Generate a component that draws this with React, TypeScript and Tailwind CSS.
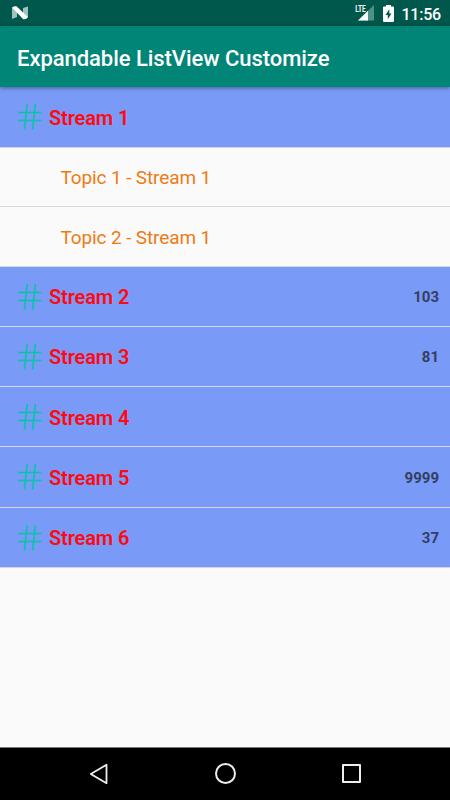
interface Stream {
    name: string;
    count?: number;
    topics?: string[];
    height: string;
}

const streams: Stream[] = [
    {
        name: "Stream 1",
        topics: ["Topic 1 - Stream 1", "Topic 2 - Stream 1"],
        height: "h-[61px]",
    },
    { name: "Stream 2", count: 103, height: "h-[60px]" },
    { name: "Stream 3", count: 81, height: "h-[60px]" },
    { name: "Stream 4", height: "h-[60px] pt-px" },
    { name: "Stream 5", count: 9999, height: "h-[61px]" },
    { name: "Stream 6", count: 37, height: "h-[60px]" },
];

const HashIcon = () => (
    <svg
        width="24"
        height="28"
        viewBox="0 0 24 28"
        fill="none"
        stroke="#09c4a9"
        strokeWidth="1.7"
    >
        <path d="M0 9.5h23.6M0 17.5h23.6M9.2 1L6.4 26.6M17.4 1L14.6 26.6" />
    </svg>
);

const StatusBar = () => (
    <div className="flex h-[26px] shrink-0 items-center bg-[#00574b] pl-3 pr-[9px] text-white">
        <svg width="16" height="14" viewBox="0 0 16 14">
            <path d="M0 1.5L5 .5V11L0 13zM11 2L16 .5V11L11 13z" fill="#9fc3bd" />
            <path d="M0 1.5Q3-.6 5 .7L16 11Q13.8 14.3 11 13z" fill="#fff" />
        </svg>
        <div className="ml-auto flex items-center">
            <svg width="20" height="18" viewBox="0 0 20 18">
                <path d="M3 16.500L19 1V16.500z" fill="#528f85" />
                <path d="M3 16.500L13 6.800V16.500z" fill="#fff" />
                <path d="M0 0H11V8L9 10H0z" fill="#00574b" />
                <text
                    x="0.2"
                    y="8.2"
                    fill="#fff"
                    fontSize="9"
                    fontWeight="700"
                    textLength="10.5"
                    lengthAdjust="spacingAndGlyphs"
                >
                    LTE
                </text>
            </svg>
            <svg className="ml-[8px]" width="11" height="17" viewBox="0 0 11 17">
                <path
                    d="M3 0h5v1.6h2q1 0 1 1V16q0 1-1 1H1q-1 0-1-1V2.600q0-1 1-1h2z"
                    fill="#fff"
                />
                <path d="M6.300 4.300L2.500 10h2.300v4.200L8.500 8.500H6.300z" fill="#00574b" />
            </svg>
            <span className="ml-[7px] mt-[3px] text-[16px] leading-none font-medium tracking-[-0.2px]">
                11:56
            </span>
        </div>
    </div>
);

const StreamRow = ({ name, count, height }: Stream) => (
    <div
        className={`flex shrink-0 items-center border-b border-[#d3d6e2] bg-[#799af6] pl-[18px] pr-[11px] ${height}`}
    >
        <HashIcon />
        <span className="mt-px ml-[7px] text-[20px] font-semibold tracking-[-0.12px] text-[#ff0a10]">
            {name}
        </span>
        {count !== undefined && (
            <span className="mt-[2px] ml-auto text-[15px] font-bold text-[#32405f]">
                {count}
            </span>
        )}
    </div>
);

const NavigationBar = () => (
    <div className="flex h-[53px] shrink-0 items-center justify-between border-t border-[#777] bg-black pr-[89px] pb-px pl-[88px]">
        <svg width="20" height="22" viewBox="0 0 20 22" fill="none">
            <path
                d="M18.500 1.800V20.200L2.800 11z"
                stroke="#eee"
                strokeWidth="1.8"
                strokeLinejoin="round"
            />
        </svg>
        <div className="size-[21px] rounded-full border-2 border-[#eee]" />
        <div className="size-[19px] rounded-[1px] border-2 border-[#eee]" />
    </div>
);

export default function App() {
    return (
        <div className="flex h-[800px] w-[450px] flex-col overflow-hidden bg-[#fafafa] font-['Roboto',sans-serif]">
            <StatusBar />
            <header className="z-10 flex h-[61px] shrink-0 items-center bg-[#008577] pl-[17px] pt-[4px] shadow-[0_1px_4px_rgba(0,0,0,0.4)]">
                <h1 className="text-[22px] font-medium tracking-[-0.05px] text-white">
                    Expandable ListView Customize
                </h1>
            </header>
            <main className="flex flex-1 flex-col">
                {streams.map((stream) => (
                    <section key={stream.name} className="flex flex-col">
                        <StreamRow {...stream} />
                        {stream.topics?.map((topic) => (
                            <div
                                key={topic}
                                className="flex h-[59px] items-center border-b border-[#d9d9da] pt-[3px] pl-[60.5px] text-[19px] tracking-[-0.12px] text-[#ee7b12] last:h-[60px]"
                            >
                                {topic}
                            </div>
                        ))}
                    </section>
                ))}
            </main>
            <NavigationBar />
        </div>
    );
}
